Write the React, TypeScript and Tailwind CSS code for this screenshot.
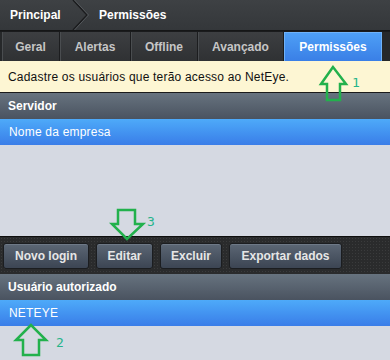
import React from 'react';

const tabs = [
  { label: 'Geral', w: 'w-[58px]' },
  { label: 'Alertas', w: 'w-[71px]' },
  { label: 'Offline', w: 'w-[67px]' },
  { label: 'Avançado', w: 'w-[86px]' },
];

const buttons = [
  { label: 'Novo login', w: 'w-[86px]' },
  { label: 'Editar', w: 'w-[57px]' },
  { label: 'Excluir', w: 'w-[62px]' },
  { label: 'Exportar dados', w: 'w-[113px]' },
];

function SectionHeader({ title }: { title: string }) {
  return (
    <div className="h-[26px] flex items-center px-2 bg-gradient-to-b from-[#67737f] to-[#4a5360] text-white font-bold text-[12px]">
      {title}
    </div>
  );
}

function SelectedRow({ text }: { text: string }) {
  return (
    <div className="h-[26px] flex items-center px-[9px] bg-gradient-to-b from-[#4eaaf9] to-[#3a7de8] text-white text-[12px] tracking-[0.2px]">
      {text}
    </div>
  );
}

function Annotations() {
  const green = '#22b14c';
  return (
    <svg className="absolute inset-0 pointer-events-none" width="390" height="360" viewBox="0 0 390 360">
      <polygon
        points="333,67 321,84 327,84 327,100 340,100 340,84 346,84"
        fill="none"
        stroke={green}
        strokeWidth="2.5"
      />
      <text x="352" y="87" fill="#26b48a" fontSize="13" fontFamily="DejaVu Sans Mono, monospace">1</text>
      <polygon
        points="118,210 135,210 135,224 143,224 127,239 112,224 118,224"
        fill="none"
        stroke={green}
        strokeWidth="2.5"
      />
      <text x="147" y="226" fill="#26b48a" fontSize="13" fontFamily="DejaVu Sans Mono, monospace">3</text>
      <polygon
        points="31,325 16,340 23,340 23,355 39,355 39,340 46,340"
        fill="none"
        stroke={green}
        strokeWidth="2.5"
      />
      <text x="56" y="347" fill="#26b48a" fontSize="13" fontFamily="DejaVu Sans Mono, monospace">2</text>
    </svg>
  );
}

export default function App() {
  return (
    <div className="relative w-[390px] h-[360px] overflow-hidden bg-[#d5d9e2] font-['Liberation_Sans',Arial,sans-serif]">
      {/* Breadcrumb */}
      <div className="h-[31px] flex items-center bg-gradient-to-b from-[#3e4144] to-[#34373a] border-b border-[#151617] text-white font-bold text-[12px]">
        <span className="pl-[10px] w-[72px]">Principal</span>
        <svg width="18" height="30" viewBox="0 0 18 30" className="shrink-0">
          <polyline points="1,0 15,15 1,30" fill="none" stroke="#1b1c1e" strokeWidth="1.5" />
          <polyline points="2.5,0 16.5,15 2.5,30" fill="none" stroke="#55595d" strokeWidth="1" />
        </svg>
        <span className="pl-[9px]">Permissões</span>
      </div>

      {/* Tabs */}
      <div className="h-[30px] flex bg-[#26282a] border-t border-[#1a1b1d] pl-[2px]">
        {tabs.map((t) => (
          <div
            key={t.label}
            className={`${t.w} h-full flex items-center justify-center border-r border-[#1c1d1f] bg-gradient-to-b from-[#3d3f42] to-[#2f3133] shadow-[inset_1px_0_0_#4a4d50] text-[#c6c6c6] font-bold text-[12px]`}
          >
            {t.label}
          </div>
        ))}
        <div className="w-[98px] h-full flex items-center justify-center bg-gradient-to-b from-[#4e9ff6] to-[#3a7fe6] border border-[#6fb2f8] border-b-0 text-white font-bold text-[12px]">
          Permissões
        </div>
      </div>

      {/* Notice */}
      <div className="h-[32px] flex items-center px-2 bg-[#fdf6d3] border-b border-[#1a1a1a] text-[#111] text-[12px] tracking-[0.2px]">
        Cadastre os usuários que terão acesso ao NetEye.
      </div>

      <SectionHeader title="Servidor" />
      <SelectedRow text="Nome da empresa" />
      <div className="h-[91px] bg-[#d5d9e2]" />

      {/* Toolbar */}
      <div className="h-[38px] flex items-center gap-[7px] px-[3px] bg-[#2a2b2c] border-t border-[#0e0e0e] bg-[radial-gradient(#3a3b3c_1px,transparent_1px)] bg-[length:3px_3px]">
        {buttons.map((b) => (
          <div
            key={b.label}
            className={`${b.w} h-[26px] flex items-center justify-center rounded-[3px] border border-[#1b1d20] bg-gradient-to-b from-[#5c6775] to-[#3c4553] shadow-[inset_0_1px_0_#6e7987] text-[#e6e6e6] font-bold text-[12px]`}
          >
            {b.label}
          </div>
        ))}
      </div>

      <SectionHeader title="Usuário autorizado" />
      <SelectedRow text="NETEYE" />

      <Annotations />
    </div>
  );
}
